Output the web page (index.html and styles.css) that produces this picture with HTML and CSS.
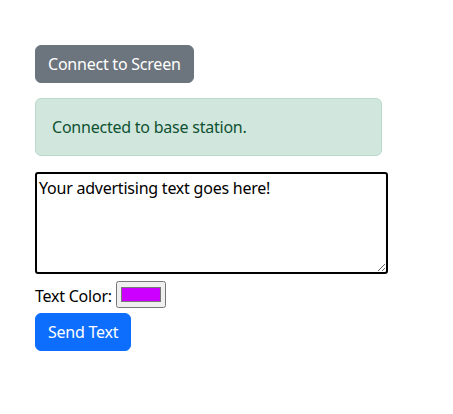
FILE: index.html
```html
<!DOCTYPE html>
<html lang="en">
<head>
  <meta charset="UTF-8" />
  <title>Screen Advertiser</title>
  <meta name="viewport" content="width=device-width, initial-scale=1.0">
  <link rel="stylesheet" href="styles.css">
</head>
<body>
  <div class="container">
    <button class="btn btn-secondary connect-btn">Connect to Screen</button>
    <div class="alert alert-success">Connected to base station.</div>
    <textarea class="ad-text" id="ad-text">Your advertising text goes here!</textarea>
    <div class="color-row">
      <label for="text-color">Text Color:</label>
      <input type="color" id="text-color" value="#cc00ff" />
    </div>
    <button class="btn btn-primary send-btn">Send Text</button>
  </div>
</body>
</html>
```

FILE: styles.css
```css
body {
  margin: 0;
  padding: 0;
  background-color: #ffffff;
  font-family: "Noto Sans", sans-serif;
  font-size: 16px;
  line-height: 1.5;
  letter-spacing: -0.23px;
  color: #212529;
}

.container {
  display: flex;
  flex-direction: column;
  align-items: flex-start;
  padding: 45px 35px 0 35px;
}

.btn {
  font-family: inherit;
  font-size: 16px;
  line-height: 24px;
  letter-spacing: inherit;
  padding: 6px 12px;
  border: 1px solid transparent;
  border-radius: 6px;
  color: #ffffff;
  cursor: pointer;
}

.btn-secondary {
  background-color: #6c757d;
  border-color: #6c757d;
}

.btn-primary {
  background-color: #0d6efd;
  border-color: #0d6efd;
}

.connect-btn {
  margin-bottom: 15px;
}

.alert {
  box-sizing: border-box;
  width: 347px;
  padding: 16px;
  margin-bottom: 16px;
  border: 1px solid transparent;
  border-radius: 6px;
}

.alert-success {
  background-color: #d1e7dd;
  border-color: #badbcc;
  color: #0f5132;
}

.ad-text {
  box-sizing: border-box;
  width: 353px;
  height: 102px;
  margin: 0 0 7px 0;
  padding: 2px;
  border: 2px solid #000000;
  border-radius: 3px;
  font-family: inherit;
  font-size: 16px;
  line-height: 1.5;
  letter-spacing: inherit;
  color: #000000;
}

.color-row {
  display: flex;
  align-items: flex-end;
  gap: 4px;
  color: #000000;
  line-height: 24px;
}

.color-row input {
  box-sizing: border-box;
  width: 50px;
  height: 27px;
  margin: 0;
}

.send-btn {
  margin-top: 5px;
}
```
